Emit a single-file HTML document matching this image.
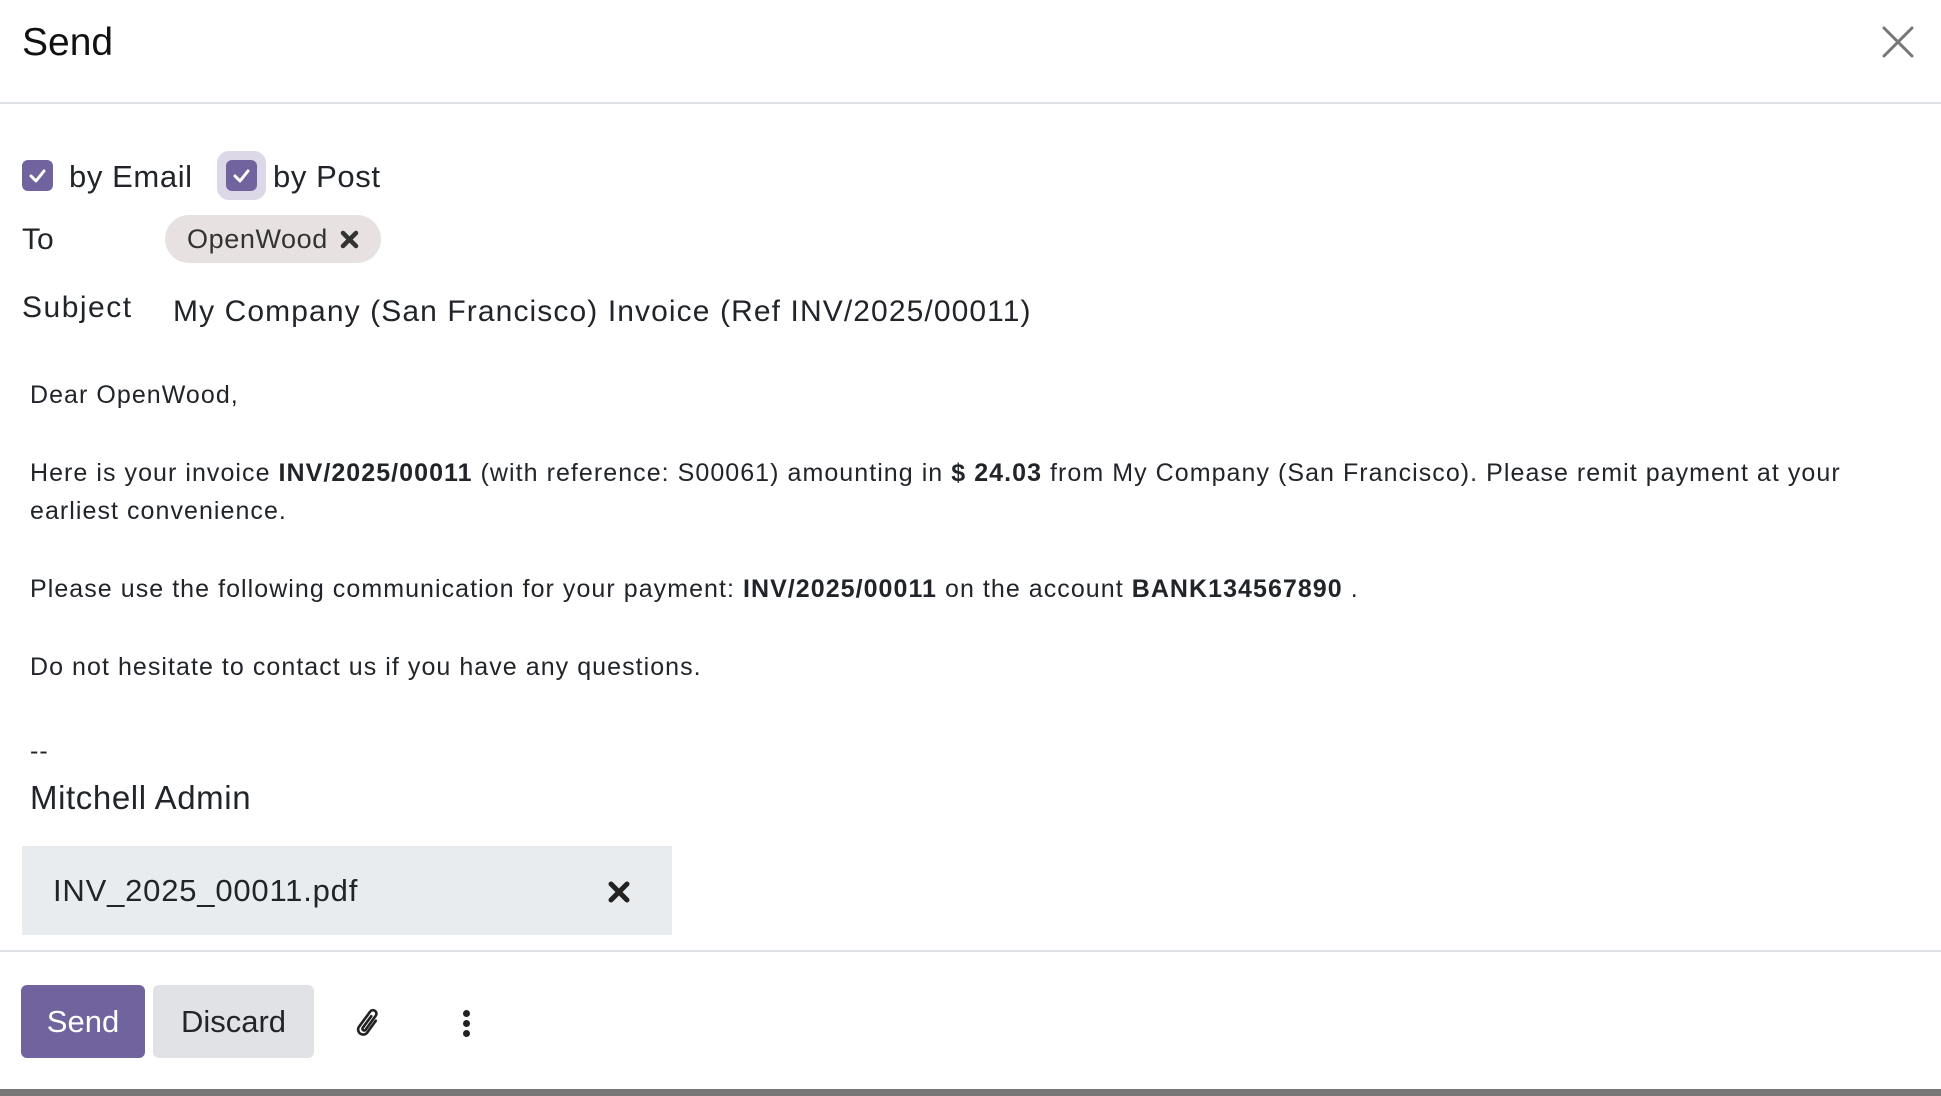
<!DOCTYPE html>
<html><head><meta charset="utf-8"><style>
*{margin:0;padding:0;box-sizing:border-box}
body{width:1941px;height:1096px;background:#fff;font-family:"Liberation Sans",sans-serif;color:#212529;position:relative;overflow:hidden}
.a{position:absolute;white-space:nowrap;line-height:1}
.body{font-size:25px;left:30px;letter-spacing:1.05px}
b{font-weight:bold}
.cb{position:absolute;width:31px;height:31px;border-radius:6px;background:#71639e}
</style></head><body>
<div class="a" style="left:22px;top:23px;font-size:39px;color:#111">Send</div>
<svg class="a" style="left:1881px;top:25px" width="34" height="34" viewBox="0 0 34 34"><path d="M3 3L31 31M31 3L3 31" stroke="#777" stroke-width="3" stroke-linecap="round"/></svg>
<div class="a" style="left:0;top:102px;width:1941px;height:2px;background:#dee2e6"></div>

<div class="cb" style="left:22px;top:160px"></div>
<svg class="a" style="left:22px;top:160px" width="31" height="31"><path d="M9 16l5 5 8-10" fill="none" stroke="#fff" stroke-width="3" stroke-linecap="round" stroke-linejoin="round"/></svg>
<div class="a" style="left:69px;top:161px;font-size:31px;letter-spacing:0.6px">by Email</div>
<div class="a" style="left:217px;top:151px;width:49px;height:49px;border-radius:12px;background:#dcd8e8"></div>
<div class="cb" style="left:226px;top:160px"></div>
<svg class="a" style="left:226px;top:160px" width="31" height="31"><path d="M9 16l5 5 8-10" fill="none" stroke="#fff" stroke-width="3" stroke-linecap="round" stroke-linejoin="round"/></svg>
<div class="a" style="left:273px;top:161px;font-size:31px;letter-spacing:0.6px">by Post</div>

<div class="a" style="left:22px;top:225px;font-size:30px">To</div>
<div class="a" style="left:165px;top:215px;width:216px;height:48px;border-radius:24px;background:#e7e1e1"></div>
<div class="a" style="left:187px;top:226px;font-size:27px;color:#333;letter-spacing:0.6px">OpenWood</div>
<svg class="a" style="left:340px;top:230px" width="19" height="19"><path d="M3 3L16 16M16 3L3 16" stroke="#333" stroke-width="4.5" stroke-linecap="round"/></svg>

<div class="a" style="left:22px;top:293px;font-size:30px;letter-spacing:1.5px">Subject</div>
<div class="a" style="left:173px;top:297px;font-size:30px;letter-spacing:1.1px">My Company (San Francisco) Invoice (Ref INV/2025/00011)</div>

<div class="a body" style="top:383px">Dear OpenWood,</div>
<div class="a body" style="top:461px">Here is your invoice <b>INV/2025/00011</b> (with reference: S00061) amounting in <b>$ 24.03</b> from My Company (San Francisco). Please remit payment at your</div>
<div class="a body" style="top:499px">earliest convenience.</div>
<div class="a body" style="top:577px">Please use the following communication for your payment: <b>INV/2025/00011</b> on the account <b>BANK134567890</b> .</div>
<div class="a body" style="top:655px">Do not hesitate to contact us if you have any questions.</div>
<div class="a body" style="top:739px">--</div>
<div class="a" style="left:30px;top:781px;font-size:33px;letter-spacing:0.6px">Mitchell Admin</div>

<div class="a" style="left:22px;top:846px;width:650px;height:89px;background:#e9ecef"></div>
<div class="a" style="left:53px;top:875px;font-size:31px;letter-spacing:0.8px">INV_2025_00011.pdf</div>
<svg class="a" style="left:607px;top:880px" width="24" height="24"><path d="M4 4L20 20M20 4L4 20" stroke="#222" stroke-width="5" stroke-linecap="round"/></svg>

<div class="a" style="left:0;top:950px;width:1941px;height:2px;background:#dee2e6"></div>
<div class="a" style="left:21px;top:985px;width:124px;height:73px;border-radius:6px;background:#71639e"></div>
<div class="a" style="left:21px;top:1006px;width:124px;text-align:center;font-size:31px;color:#fff">Send</div>
<div class="a" style="left:153px;top:985px;width:161px;height:73px;border-radius:6px;background:#e0e2e6"></div>
<div class="a" style="left:153px;top:1006px;width:161px;text-align:center;font-size:31px">Discard</div>
<svg class="a" style="left:352px;top:1006px" width="34" height="34" viewBox="0 0 30 30"><path d="M21 13L13 24a4.5 4.5 0 0 1-7-5.5L16 5a3 3 0 0 1 5 3.5L12 21a1.5 1.5 0 0 1-2.5-1.8L17 9" fill="none" stroke="#222" stroke-width="2.3" stroke-linecap="round"/></svg>
<div class="a" style="left:463px;top:1010px;width:7px;height:7px;border-radius:50%;background:#222"></div>
<div class="a" style="left:463px;top:1020px;width:7px;height:7px;border-radius:50%;background:#222"></div>
<div class="a" style="left:463px;top:1030px;width:7px;height:7px;border-radius:50%;background:#222"></div>
<div class="a" style="left:0;top:1089px;width:1941px;height:7px;background:#777"></div>
</body></html>
